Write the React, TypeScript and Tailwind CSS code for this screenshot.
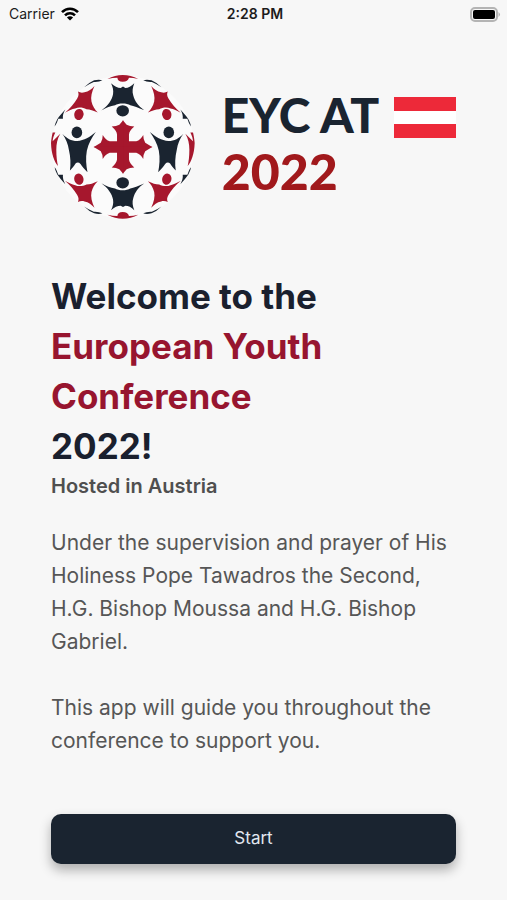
import { useState } from 'react';

const NAVY = '#1a2430';
const RED = '#a6172d';

// One quarter of the globe's small figures, mirrored to fill the other three
function GlobeCorner() {
    return (
        <>
            <g fill={RED}>
                <ellipse cx="117" cy="149" rx="14" ry="17" transform="rotate(14 117 149)" />
                <path d="M164 63C156 80 152 96 155 110C158 124 165 134 174 143C161 137 150 133 140 133C130 128 116 126 106 131C96 132 87 138 75 144C90 132 103 116 112 101C117 93 117 86 114 80C121 84 128 84 134 82C146 80 156 72 164 63Z" />
            </g>
            <g fill={NAVY}>
                <path d="M133 67Q147 53 163 46Q178 42 188 46Q177 52 162 51Q147 57 133 67Z" />
                <path d="M76 134C66 145 57 155 52 163C48 171 45 178 44 185C50 178 52 170 55 162L69 162C68 153 70 144 76 134Z" />
            </g>
        </>
    );
}

function SideFigure() {
    return (
        <>
            <g fill={NAVY}>
                <ellipse cx="111" cy="203" rx="16" ry="18" />
                <path d="M67 207C80 221 94 229 112 229C133 228 150 217 168 202C156 219 146 236 141 258C137 280 139 302 143 323C134 314 127 306 122 298Q114 290 107 297C103 304 97 311 90 318C93 299 92 277 87 256C84 238 78 221 67 207Z" />
            </g>
            <path fill={RED} d="M61 207C52 222 49 238 49 255C49 275 51 290 54 304C43 292 34 268 33 235C34 222 36 212 38 203L46 203C41 212 38 224 38 230C46 222 53 214 61 207Z" />
        </>
    );
}

function TopFigure() {
    return (
        <>
            <g fill={NAVY}>
                <ellipse cx="249" cy="138" rx="19" ry="17" />
                <path d="M185 137C205 122 217 105 220 88C222 76 219 66 214 55C224 65 234 69 243 69L250 65L257 69C266 69 275 65 284 55C279 68 277 80 281 92C286 110 296 124 314 136C295 128 283 123 272 121C262 114 236 114 226 121C212 123 200 128 185 137Z" />
            </g>
            <path fill={RED} d="M203 42Q226 30 249 30Q274 30 296 42Q280 38 268 38Q265 50 249 50Q234 50 233 38Q219 38 203 42Z" />
        </>
    );
}

function CrossArm() {
    return (
        <path d="M-1 -80H0L11 -67Q20 -62 34 -62Q19 -49 18 -38V-17H40Q53 -21 61 -36Q61 -22 67 -13L88 0V1H-1Z" />
    );
}

function GlobeLogo() {
    return (
        <svg viewBox="33 30 434 434" className="w-36 shrink-0" role="img" aria-label="European Youth Conference">
            <circle cx="250" cy="247" r="215" fill="#fbfbfb" />
            <GlobeCorner />
            <g transform="translate(499 0) scale(-1 1)"><GlobeCorner /></g>
            <g transform="translate(0 493) scale(1 -1)"><GlobeCorner /></g>
            <g transform="translate(499 493) scale(-1 -1)"><GlobeCorner /></g>
            <SideFigure />
            <g transform="translate(499 0) scale(-1 1)"><SideFigure /></g>
            <TopFigure />
            <g transform="translate(0 493) scale(1 -1)"><TopFigure /></g>
            <g fill={RED}>
                <g transform="translate(250 247)"><CrossArm /></g>
                <g transform="translate(250 247) scale(-1 1)"><CrossArm /></g>
                <g transform="translate(250 247) scale(1 -1)"><CrossArm /></g>
                <g transform="translate(250 247) scale(-1 -1)"><CrossArm /></g>
            </g>
        </svg>
    );
}

function StatusBar() {
    return (
        <div className="grid grid-cols-3 items-center h-7 pl-[9px] pr-1.5 text-sm leading-none text-[#1c1c1c]">
            <div className="flex items-center gap-1.5">
                <span>Carrier</span>
                <svg viewBox="0 0 18 14" className="w-[18px]" fill="none" stroke="#000" strokeWidth="2.6" aria-hidden="true">
                    <path d="M1 5.2C5.6 .6 12.4 .6 17 5.2" />
                    <path d="M4 8.4C6.8 5.6 11.2 5.6 14 8.4" />
                    <path d="M9 13.6L5.9 10.5C7.6 8.9 10.4 8.9 12.1 10.5Z" fill="#000" stroke="none" />
                </svg>
            </div>
            <span className="justify-self-center font-semibold">2:28 PM</span>
            <svg viewBox="0 0 31 15" className="w-[31px] justify-self-end" aria-label="Battery full" role="img">
                <rect x="1" y="1" width="26" height="13" rx="4" fill="#f7f7f7" stroke="#b4b4b4" strokeWidth="2" />
                <rect x="3" y="3" width="22" height="9" rx="2" fill="#000" />
                <path d="M28.5 5Q31.5 7.5 28.5 10Z" fill="#b4b4b4" />
            </svg>
        </div>
    );
}

export default function App() {
    const [started, setStarted] = useState(false);

    return (
        <div className="min-h-screen flex flex-col bg-[#f7f7f7] font-['Inter',sans-serif]">
            <StatusBar />

            <main className="flex-1 flex flex-col px-[51px] pt-[47px] pb-9">
                <header className="flex items-start justify-between">
                    <GlobeLogo />
                    <div className="ml-3 pt-3 font-['Lato',sans-serif] text-5xl leading-[56px] font-black whitespace-nowrap">
                        <div className="text-[#1a2430]">EYC AT</div>
                        <div className="text-[50px] leading-[56px] text-[#a1191c]">2022</div>
                    </div>
                    <div className="mt-[22px] w-[62px] h-[41px] flex flex-col" role="img" aria-label="Flag of Austria">
                        <div className="flex-1 bg-[#ed2939]" />
                        <div className="flex-1 bg-white" />
                        <div className="flex-1 bg-[#ed2939]" />
                    </div>
                </header>

                <h1 className="mt-[52px] text-[35px] leading-[50px] font-bold text-[#1a202e]">
                    Welcome to the
                    <span className="block text-[#97152f]">European Youth Conference</span>
                    2022!
                </h1>
                <p className="mt-px text-xl leading-7 font-semibold text-[#4f4f4f]">Hosted in Austria</p>

                <div className="mt-[26px] flex flex-col gap-[33px] text-[21px] leading-[33px] text-[#565656]">
                    <p>
                        Under the supervision and prayer of His Holiness Pope Tawadros the Second, H.G. Bishop Moussa
                        and H.G. Bishop Gabriel.
                    </p>
                    <p>This app will guide you throughout the conference to support you.</p>
                </div>

                <button
                    type="button"
                    aria-pressed={started}
                    onClick={() => setStarted(true)}
                    className="mt-auto h-[50px] w-full rounded-[10px] bg-[#1a2430] text-[17px] text-[#e3e8f0] shadow-[0_6px_12px_rgba(0,0,0,0.3)]"
                >
                    Start
                </button>
            </main>
        </div>
    );
}
